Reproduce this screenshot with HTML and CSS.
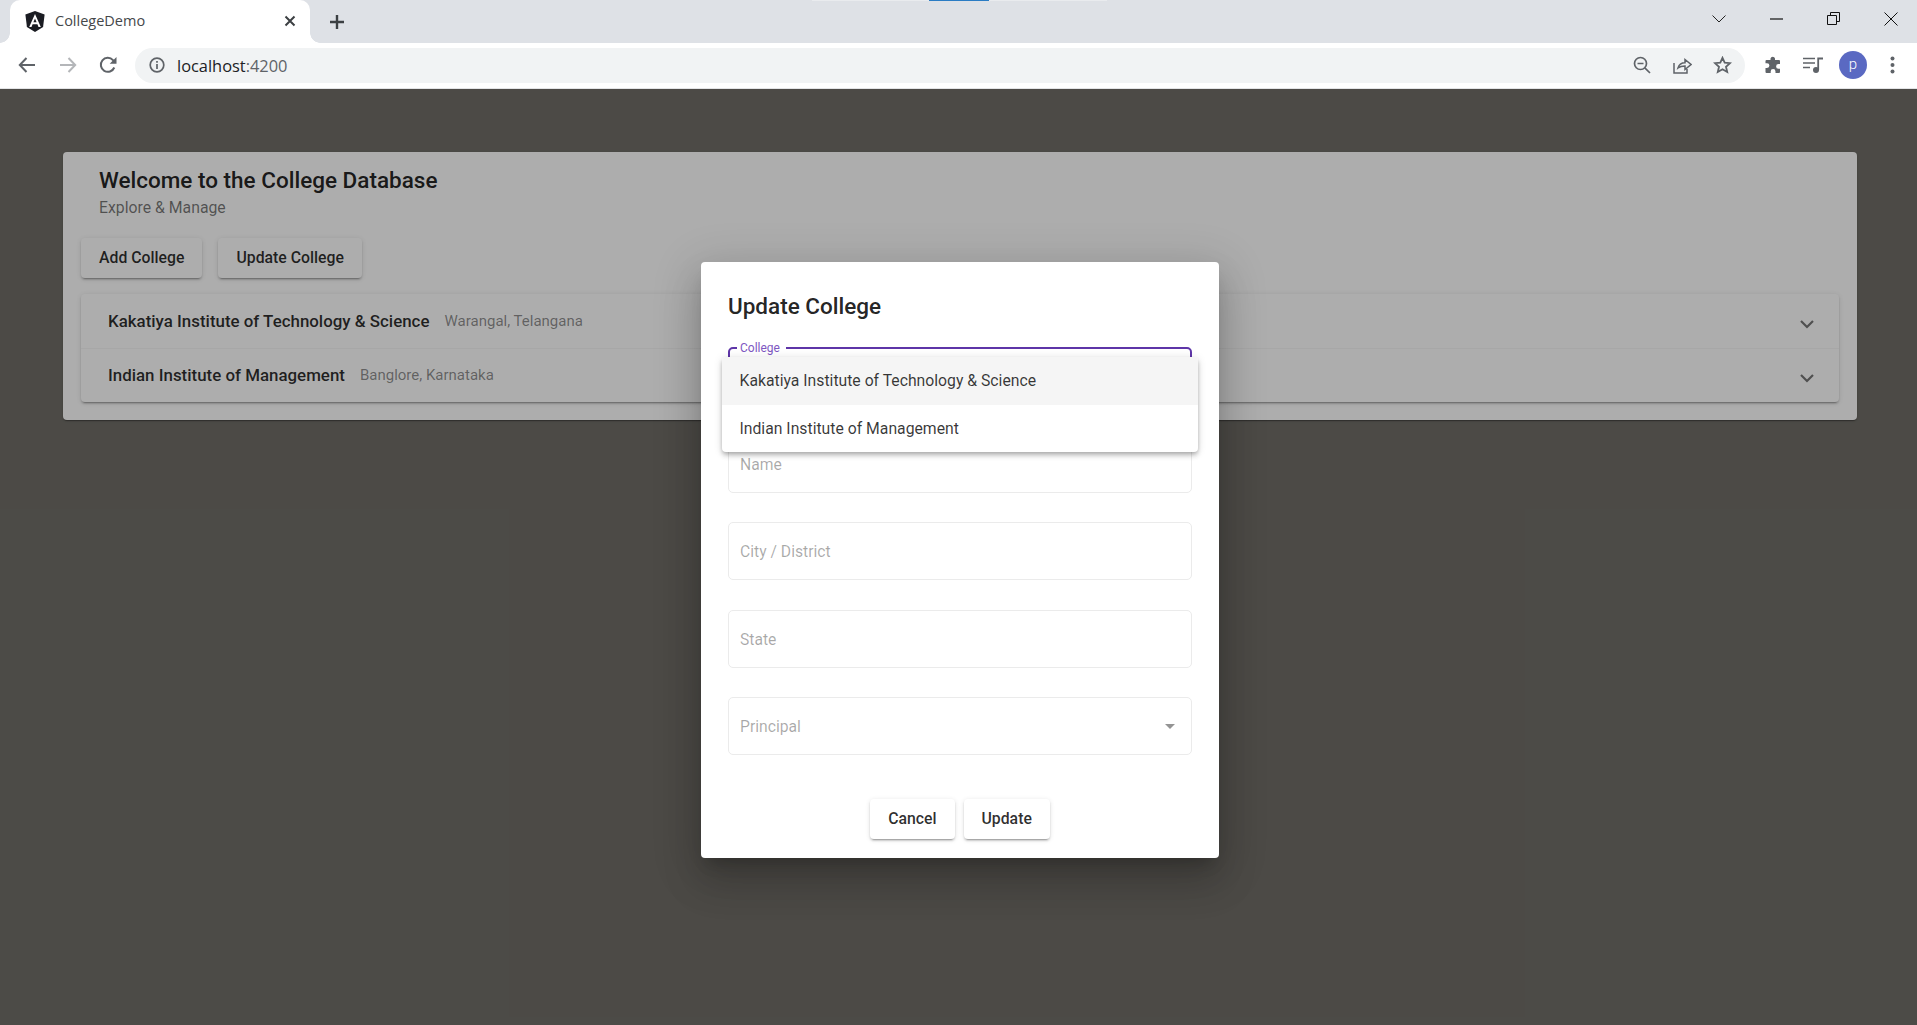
FILE: index.html
```html
<!DOCTYPE html>
<html lang="en">

<head>
    <meta charset="UTF-8">
    <title>CollegeDemo</title>
    <link rel="stylesheet" href="styles.css">
</head>

<body>
    <div class="tab-strip">
        <span class="strip-glow"></span>
        <span class="strip-mark"></span>
        <div class="tab">
            <svg class="tab-logo" width="20" height="21" viewBox="0 0 20 21">
                <path fill="#1a1c22" d="M10 0 19.6 3.4 18.1 16 10 21 1.9 16 .4 3.4Z" />
                <path fill="#fff" d="M10 3 4.2 16H6.5L7.6 13.2H12.4L13.5 16H15.8ZM11.6 11.2H8.4L10 7.4Z" />
            </svg>
            <span class="tab-title">CollegeDemo</span>
            <svg class="tab-close" width="12" height="12" viewBox="0 0 12 12">
                <path stroke="#3c4043" stroke-width="2" d="M1.5 1.5 10.5 10.5M10.5 1.5 1.5 10.5" />
            </svg>
        </div>
        <svg class="new-tab" width="16" height="16" viewBox="0 0 16 16">
            <path stroke="#3c4043" stroke-width="2.400" d="M8 1V15M1 8H15" />
        </svg>
        <div class="window-controls">
            <svg width="14" height="8" viewBox="0 0 14 8">
                <path fill="none" stroke="#222" d="M.5 .5 7 7 13.5 .5" />
            </svg>
            <svg width="13" height="2" viewBox="0 0 13 2">
                <path stroke="#111" stroke-width="1.2" d="M0 1H13" />
            </svg>
            <svg width="13" height="13" viewBox="0 0 13 13">
                <path fill="none" stroke="#111" d="M.5 3.5H9.5V12.5H.5ZM3.5 3.5V.5H12.5V9.5H9.5" />
            </svg>
            <svg width="14" height="14" viewBox="0 0 14 14">
                <path stroke="#111" d="M.5 .5 13.5 13.5M13.5 .5 .5 13.5" />
            </svg>
        </div>
    </div>

    <div class="toolbar">
        <svg class="nav-icon" width="18" height="16" viewBox="0 0 18 16">
            <path fill="none" stroke="#5f6368" stroke-width="2" d="M17 8H2M8.5 1 1.8 8 8.500 15" />
        </svg>
        <svg class="nav-icon" width="18" height="16" viewBox="0 0 18 16">
            <path fill="none" stroke="#b4b6b9" stroke-width="2" d="M1 8H16M9.500 1 16.200 8 9.500 15" />
        </svg>
        <svg class="nav-icon" width="18" height="18" viewBox="0 0 18 18">
            <path fill="none" stroke="#5f6368" stroke-width="2" d="M15.300 11.500A7 7 0 1 1 14 4.100L16 6.200" />
            <path fill="#5f6368" d="M17.500 1V7.800H10.700Z" />
        </svg>
        <div class="omnibox">
            <svg width="16" height="16" viewBox="0 0 16 16">
                <circle cx="8" cy="8" r="6.800" fill="none" stroke="#5f6368" stroke-width="1.700" />
                <path stroke="#5f6368" stroke-width="1.700" d="M8 7V12M8 4V5.800" />
            </svg>
            <span class="url">localhost<span class="url-port">:4200</span></span>
            <div class="omnibox-actions">
                <svg width="18" height="18" viewBox="0 0 18 18">
                    <circle cx="7.500" cy="7.500" r="6" fill="none" stroke="#5f6368" stroke-width="1.700" />
                    <path stroke="#5f6368" stroke-width="1.700" d="M4.500 7.500H10.500M11.800 11.800 17 17" />
                </svg>
                <svg width="19" height="18" viewBox="0 0 19 18">
                    <path fill="none" stroke="#5f6368" stroke-width="1.500" d="M1 7V17H14V13M5 12C6 8.500 8.500 6.800 12 6.800V3.500L18 8.500 12 13.500V10C9 10 7 10.500 5 12Z" />
                </svg>
                <svg width="19" height="18" viewBox="0 0 19 18">
                    <path fill="none" stroke="#5f6368" stroke-width="1.800" d="M9.500 1.800 11.700 6.700 17 7.200 13 10.800 14.200 16 9.500 13.300 4.800 16 6 10.800 2 7.200 7.300 6.700Z" />
                </svg>
            </div>
        </div>
        <div class="toolbar-right">
            <svg width="18" height="18" viewBox="0 0 18 18">
                <path fill="#5f6368" d="M6.500 2.500A2.300 2.300 0 0 1 11 2.500V4H15A1 1 0 0 1 16 5V8H14.500A2.400 2.400 0 0 0 14.500 12.800H16V16A1 1 0 0 1 15 17H11.500V15.500A2.400 2.400 0 0 0 6.700 15.500V17H2.500A1 1 0 0 1 1.500 16V12H3A2.400 2.400 0 0 0 3 7.200H1.500V5A1 1 0 0 1 2.500 4H6.500Z" />
            </svg>
            <svg class="media-icon" width="20" height="16" viewBox="0 0 20 16">
                <path stroke="#5f6368" stroke-width="1.700" d="M0 1.500H12M0 6H12M0 10.500H7" />
                <circle cx="13" cy="13" r="3" fill="#5f6368" />
                <path fill="none" stroke="#5f6368" stroke-width="1.800" d="M15.200 13V1.500H20" />
            </svg>
            <span class="avatar">p</span>
            <svg class="kebab" width="5" height="18" viewBox="0 0 5 18">
                <circle cx="2.500" cy="2.500" r="2" fill="#5f6368" />
                <circle cx="2.500" cy="9" r="2" fill="#5f6368" />
                <circle cx="2.500" cy="15.500" r="2" fill="#5f6368" />
            </svg>
        </div>
    </div>

    <main class="page">
        <section class="panel">
            <h1 class="panel-title">Welcome to the College Database</h1>
            <p class="panel-subtitle">Explore &amp; Manage</p>
            <div class="panel-actions">
                <button class="raised-btn" type="button">Add College</button>
                <button class="raised-btn" type="button">Update College</button>
            </div>
            <div class="accordion">
                <div class="accordion-row">
                    <span class="college-name">Kakatiya Institute of Technology &amp; Science</span>
                    <span class="college-place">Warangal, Telangana</span>
                    <svg class="chevron" width="14" height="9" viewBox="0 0 14 9">
                        <path fill="none" stroke="#000" stroke-opacity=".54" stroke-width="2.200" d="M1 1 7 7 13 1" />
                    </svg>
                </div>
                <div class="accordion-row">
                    <span class="college-name">Indian Institute of Management</span>
                    <span class="college-place">Banglore, Karnataka</span>
                    <svg class="chevron" width="14" height="9" viewBox="0 0 14 9">
                        <path fill="none" stroke="#000" stroke-opacity=".54" stroke-width="2.200" d="M1 1 7 7 13 1" />
                    </svg>
                </div>
            </div>
        </section>

        <div class="backdrop">
            <div class="dialog">
                <h2 class="dialog-title">Update College</h2>
                <div class="field field-focused">
                    <span class="field-label">College</span>
                </div>
                <div class="field"><span class="placeholder">Name</span></div>
                <div class="field"><span class="placeholder">City / District</span></div>
                <div class="field"><span class="placeholder">State</span></div>
                <div class="field">
                    <span class="placeholder">Principal</span>
                    <span class="select-arrow"></span>
                </div>
                <div class="dialog-actions">
                    <button class="raised-btn" type="button">Cancel</button>
                    <button class="raised-btn" type="button">Update</button>
                </div>
                <div class="select-menu">
                    <div class="select-option option-active">Kakatiya Institute of Technology &amp; Science</div>
                    <div class="select-option">Indian Institute of Management</div>
                </div>
            </div>
        </div>
    </main>
</body>

</html>
```

FILE: styles.css
```css
* {
    box-sizing: border-box;
}

html,
body {
    height: 100%;
}

body {
    margin: 0;
    display: flex;
    flex-direction: column;
    overflow: hidden;
    font-family: Roboto, "Liberation Sans", sans-serif;
    background-color: #706e68;
}

/* browser chrome */
.tab-strip {
    position: relative;
    display: flex;
    align-items: center;
    height: 43px;
    flex-shrink: 0;
    padding-left: 10px;
    background-color: #dee1e6;
}

.strip-glow {
    position: absolute;
    top: 0;
    left: 812px;
    width: 295px;
    height: 1px;
    background-color: #e9ebee;
}

.strip-mark {
    position: absolute;
    top: 0;
    left: 929px;
    width: 60px;
    height: 1px;
    background-color: #2a7cc4;
}

.tab {
    position: relative;
    display: flex;
    align-items: center;
    align-self: stretch;
    width: 300px;
    padding: 0 14px 1px 15px;
    background-color: #fff;
    border-radius: 10px 10px 0 0;
}

/* flared bottom corners of the active tab */
.tab::before,
.tab::after {
    content: "";
    position: absolute;
    bottom: 0;
    width: 10px;
    height: 10px;
}

.tab::before {
    left: -10px;
    background: radial-gradient(circle at 0 0, #dee1e6 9.500px, #fff 10px);
}

.tab::after {
    right: -10px;
    background: radial-gradient(circle at 100% 0, #dee1e6 9.500px, #fff 10px);
}

.tab-logo {
    flex-shrink: 0;
}

.tab-title {
    margin-left: 10px;
    padding-bottom: 2px;
    flex: 1;
    font-family: "Open Sans", sans-serif;
    font-size: 14.500px;
    color: #45474a;
}

.new-tab {
    margin-left: 19px;
}

.window-controls {
    display: flex;
    align-items: center;
    gap: 44px;
    margin-left: auto;
    padding-right: 19px;
    margin-top: -6px;
}

.toolbar {
    display: flex;
    align-items: center;
    height: 46px;
    flex-shrink: 0;
    padding: 0 0 1px 18px;
    background-color: #fff;
    border-bottom: 1px solid #e3e4e6;
}

.nav-icon {
    margin-right: 23px;
}

.nav-icon:nth-child(2) {
    margin-right: 22px;
}

.nav-icon:nth-child(3) {
    margin-right: 18px;
}

.omnibox {
    display: flex;
    align-items: center;
    width: 1610px;
    height: 35px;
    padding: 0 13px 0 14px;
    background-color: #f1f3f4;
    border-radius: 18px;
}

.url {
    margin-left: 12px;
    font-family: "Open Sans", sans-serif;
    font-size: 16.400px;
    color: #202124;
}

.url-port {
    color: #5f6368;
}

.omnibox-actions {
    display: flex;
    align-items: center;
    gap: 21.500px;
    margin-left: auto;
}

.toolbar-right {
    display: flex;
    align-items: center;
    gap: 20px;
    margin-left: 19px;
}

.media-icon {
    margin-left: 1px;
}

.avatar {
    width: 28px;
    height: 28px;
    margin-left: -4px;
    border-radius: 50%;
    text-align: center;
    font-size: 15px;
    font-weight: 300;
    line-height: 26px;
    color: #fff;
    background-color: #5a69c2;
}

.kebab {
    margin-left: 3px;
}

/* app */
.page {
    position: relative;
    flex: 1;
    padding: 63px 60px 0 63px;
}

.panel {
    height: 268px;
    padding: 13px 18px 0;
    background-color: #fff;
    border-radius: 4px;
    box-shadow: 0 2px 1px -1px rgba(0, 0, 0, 0.2), 0 1px 1px rgba(0, 0, 0, 0.14), 0 1px 3px rgba(0, 0, 0, 0.12);
}

.panel-title {
    margin: 0 0 0 18px;
    font-size: 22.500px;
    line-height: 30px;
    font-weight: 500;
    color: rgba(0, 0, 0, 0.87);
}

.panel-subtitle {
    margin: 1px 0 0 18px;
    font-size: 15.800px;
    line-height: 24px;
    color: rgba(0, 0, 0, 0.54);
}

.panel-actions {
    display: flex;
    gap: 16px;
    margin-top: 18px;
}

.raised-btn {
    height: 40px;
    padding: 0 18px 2px;
    border: none;
    border-radius: 4px;
    font-family: inherit;
    font-size: 15.800px;
    font-weight: 500;
    color: rgba(0, 0, 0, 0.82);
    background-color: #fff;
    box-shadow: 0 3px 1px -2px rgba(0, 0, 0, 0.2), 0 2px 2px rgba(0, 0, 0, 0.14), 0 1px 5px rgba(0, 0, 0, 0.12);
}

.accordion {
    margin-top: 16px;
    border-radius: 4px;
    background-color: #fff;
    box-shadow: 0 3px 1px -2px rgba(0, 0, 0, 0.2), 0 2px 2px rgba(0, 0, 0, 0.14), 0 1px 5px rgba(0, 0, 0, 0.12);
}

.accordion-row {
    display: flex;
    align-items: center;
    height: 54px;
    padding: 0 25px 0 27px;
    gap: 15px;
}

.accordion-row + .accordion-row {
    padding-bottom: 1px;
    border-top: 1px solid rgba(0, 0, 0, 0.03);
}

.college-name {
    font-size: 16.900px;
    font-weight: 500;
    color: rgba(0, 0, 0, 0.82);
}

.college-place {
    font-size: 15px;
    color: rgba(0, 0, 0, 0.45);
}

.chevron {
    margin-left: auto;
    margin-top: 6px;
}

/* dialog */
.backdrop {
    position: absolute;
    inset: 0;
    display: flex;
    justify-content: center;
    align-items: center;
    padding: 6px 0 0 3px;
    background-color: rgba(0, 0, 0, 0.32);
}

.dialog {
    position: relative;
    width: 518px;
    height: 596px;
    padding: 28px 27px 0;
    background-color: #fff;
    border-radius: 4px;
    box-shadow: 0 11px 15px -7px rgba(0, 0, 0, 0.2), 0 24px 38px 3px rgba(0, 0, 0, 0.14), 0 9px 46px 8px rgba(0, 0, 0, 0.12);
}

.dialog-title {
    margin: 0 0 25px;
    font-size: 22.500px;
    line-height: 32px;
    font-weight: 500;
    color: rgba(0, 0, 0, 0.87);
}

.field {
    position: relative;
    display: flex;
    align-items: center;
    justify-content: space-between;
    height: 58px;
    margin-bottom: 29.500px;
    padding: 0 15px 0 11px;
    border: 1px solid #ebebeb;
    border-radius: 5px;
}

.field-focused {
    border: 2px solid #5e35a8;
}

.field-label {
    position: absolute;
    top: -8px;
    left: 7px;
    padding: 0 6px 0 3px;
    font-size: 12px;
    line-height: 14px;
    color: #7e57c2;
    background-color: #fff;
}

.placeholder {
    margin-top: 1px;
    font-size: 15.700px;
    color: rgba(0, 0, 0, 0.34);
}

.select-arrow {
    width: 0;
    height: 0;
    margin-right: 1px;
    border-left: 5px solid transparent;
    border-right: 5px solid transparent;
    border-top: 5px solid rgba(0, 0, 0, 0.42);
}

.dialog-actions {
    display: flex;
    justify-content: center;
    gap: 9px;
    margin-top: 44px;
}

.select-menu {
    position: absolute;
    top: 95px;
    left: 21px;
    width: 476px;
    background-color: #fff;
    border-radius: 4px;
    box-shadow: 0 2px 4px -1px rgba(0, 0, 0, 0.2), 0 4px 5px rgba(0, 0, 0, 0.14), 0 1px 10px rgba(0, 0, 0, 0.12);
}

.select-option {
    height: 47.500px;
    padding: 0 17px 0 17.500px;
    font-size: 15.750px;
    line-height: 47.500px;
    color: rgba(0, 0, 0, 0.78);
}

.option-active {
    background-color: #f5f5f5;
    border-radius: 4px 4px 0 0;
}
```
